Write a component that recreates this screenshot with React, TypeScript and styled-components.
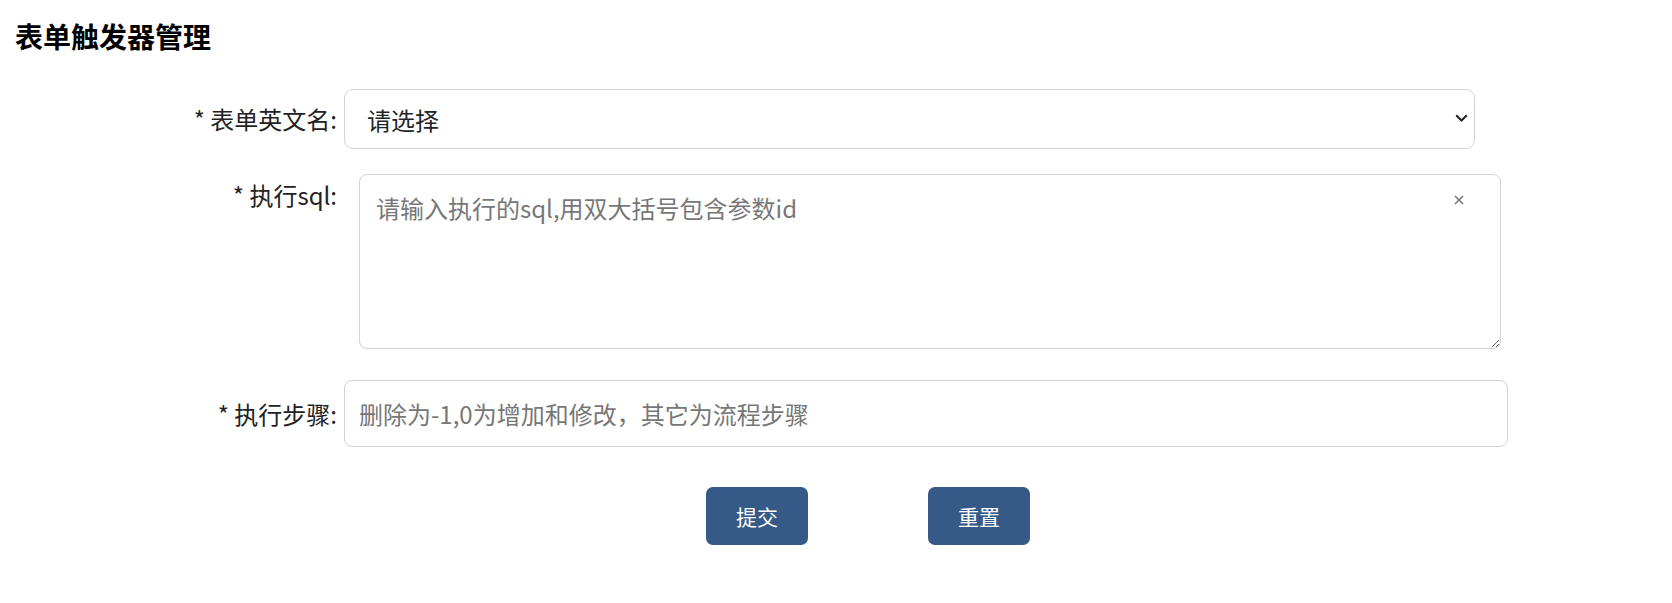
import React from "react";
import styled, { createGlobalStyle } from "styled-components";

const GlobalStyle = createGlobalStyle`
  html, body {
    margin: 0;
    padding: 0;
    background: #ffffff;
  }
  body {
    font-family: "Noto Sans CJK SC", "Noto Sans", "Liberation Sans", sans-serif;
    color: #212529;
  }
  * { box-sizing: border-box; }
`;

const Page = styled.div`
  width: 1672px;
  padding-top: 16px;
`;

const Title = styled.h3`
  margin: 0 0 0 15px;
  font-size: 28px;
  line-height: 40px;
  font-weight: 700;
  color: #000;
`;

const Form = styled.form`
  margin-top: 33px;
  display: flex;
  flex-direction: column;
`;

const Row = styled.div<{ $top?: number; $align?: string }>`
  display: flex;
  align-items: ${(p) => p.$align ?? "center"};
  margin-top: ${(p) => p.$top ?? 0}px;
`;

const Label = styled.label<{ $padTop?: number }>`
  flex: 0 0 337px;
  text-align: right;
  font-size: 24px;
  line-height: 32px;
  color: #222;
  padding-top: ${(p) => p.$padTop ?? 0}px;
  white-space: nowrap;
`;

const Field = styled.div<{ $offset: number; $width: number }>`
  position: relative;
  margin-left: ${(p) => p.$offset}px;
  width: ${(p) => p.$width}px;
  flex: 0 0 auto;
`;

const Select = styled.select`
  appearance: none;
  -webkit-appearance: none;
  width: 100%;
  height: 60px;
  padding: 0 30px 0 22px;
  border: 1px solid #d3d3d3;
  border-radius: 9px;
  background: #fff;
  font-family: inherit;
  font-size: 24px;
  color: #212529;
  outline: none;
`;

const Chevron = styled.svg`
  position: absolute;
  right: 7px;
  top: 25px;
  width: 13px;
  height: 8px;
  pointer-events: none;
`;

const TextArea = styled.textarea`
  display: block;
  width: 100%;
  height: 175px;
  padding: 17px 60px 17px 16px;
  border: 1px solid #d3d3d3;
  border-radius: 8px;
  font-family: inherit;
  font-size: 24px;
  line-height: 32px;
  color: #212529;
  outline: none;
  &::placeholder { color: #777; }
`;

const ClearIcon = styled.svg`
  position: absolute;
  right: 37px;
  top: 21px;
  width: 10px;
  height: 10px;
  cursor: pointer;
`;

const Input = styled.input`
  width: 100%;
  height: 67px;
  padding: 0 14px;
  border: 1px solid #d3d3d3;
  border-radius: 8px;
  font-family: inherit;
  font-size: 24px;
  color: #212529;
  outline: none;
  &::placeholder { color: #777; }
`;

const Actions = styled.div`
  display: flex;
  gap: 120px;
  margin-top: 40px;
  padding-left: 706px;
`;

const Button = styled.button`
  width: 102px;
  height: 58px;
  border: none;
  border-radius: 7px;
  background: #355a87;
  color: #fff;
  font-family: inherit;
  font-size: 21px;
  cursor: pointer;
`;

export default function App() {
  return (
    <>
      <GlobalStyle />
      <Page>
        <Title>表单触发器管理</Title>
        <Form onSubmit={(e) => e.preventDefault()}>
          <Row>
            <Label>* 表单英文名:</Label>
            <Field $offset={7} $width={1131}>
              <Select defaultValue="">
                <option value="">请选择</option>
              </Select>
              <Chevron viewBox="0 0 13 8">
                <path d="M1.2 1.2 L6.5 6.5 L11.8 1.2" fill="none" stroke="#222" strokeWidth="2" />
              </Chevron>
            </Field>
          </Row>
          <Row $top={25} $align="flex-start">
            <Label $padTop={5}>* 执行sql:</Label>
            <Field $offset={22} $width={1142}>
              <TextArea placeholder="请输入执行的sql,用双大括号包含参数id" />
              <ClearIcon viewBox="0 0 10 10">
                <path d="M1 1 L9 9 M9 1 L1 9" stroke="#777" strokeWidth="1.6" />
              </ClearIcon>
            </Field>
          </Row>
          <Row $top={31}>
            <Label>* 执行步骤:</Label>
            <Field $offset={7} $width={1164}>
              <Input placeholder="删除为-1,0为增加和修改，其它为流程步骤" />
            </Field>
          </Row>
          <Actions>
            <Button type="submit">提交</Button>
            <Button type="reset">重置</Button>
          </Actions>
        </Form>
      </Page>
    </>
  );
}
